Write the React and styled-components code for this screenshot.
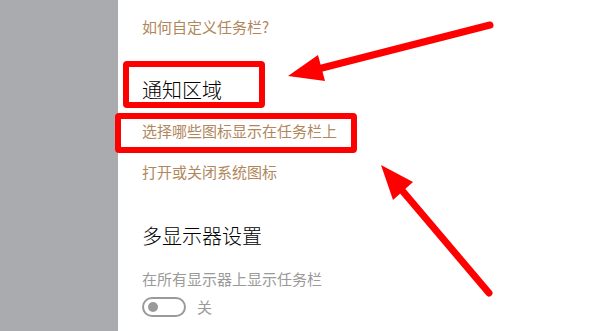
import styled, { createGlobalStyle } from 'styled-components';

const GlobalStyle = createGlobalStyle`
  html, body {
    margin: 0;
    padding: 0;
    background: #ffffff;
  }
  body {
    font-family: 'Noto Sans CJK SC', 'Noto Sans', sans-serif;
  }
`;

const Page = styled.div`
  position: relative;
  width: 600px;
  height: 331px;
  overflow: hidden;
  display: flex;
`;

const Sidebar = styled.div`
  width: 118px;
  flex: none;
  background: #a9abae;
`;

const Content = styled.div`
  flex: 1;
  display: flex;
  flex-direction: column;
  align-items: flex-start;
  padding: 17px 0 0 24px;
  background: #ffffff;
`;

const LinkText = styled.a`
  display: block;
  font-size: 15px;
  line-height: 20px;
  color: #b0875d;
  text-decoration: none;
  margin-top: ${(p) => p.$gap || 0}px;
  cursor: pointer;
`;

const Heading = styled.h2`
  margin: ${(p) => p.$gap || 0}px 0 0;
  font-size: 20px;
  line-height: 28px;
  font-weight: 300;
  color: #000000;
`;

const Hint = styled.div`
  margin-top: 19px;
  font-size: 15px;
  line-height: 20px;
  color: #9a9a9a;
`;

const ToggleRow = styled.div`
  margin-top: 8px;
  display: flex;
  align-items: center;
  gap: 11px;
`;

const Toggle = styled.div`
  box-sizing: border-box;
  width: 44px;
  height: 20px;
  border: 2px solid #9a9a9a;
  border-radius: 10px;
  display: flex;
  align-items: center;
  padding-left: 4px;
  &::before {
    content: '';
    width: 10px;
    height: 10px;
    border-radius: 50%;
    background: #9a9a9a;
  }
`;

const ToggleLabel = styled.span`
  font-size: 15px;
  line-height: 20px;
  color: #9a9a9a;
`;

const Marker = styled.div`
  position: absolute;
  box-sizing: border-box;
  left: ${(p) => p.$x}px;
  top: ${(p) => p.$y}px;
  width: ${(p) => p.$w}px;
  height: ${(p) => p.$h}px;
  border: 6px solid #ff0000;
  border-radius: 4px;
  pointer-events: none;
`;

const Arrows = styled.svg`
  position: absolute;
  left: 0;
  top: 0;
  width: 600px;
  height: 331px;
  pointer-events: none;
`;

export default function App() {
  return (
    <Page>
      <GlobalStyle />
      <Sidebar />
      <Content>
        <LinkText>如何自定义任务栏?</LinkText>
        <Heading $gap={39}>通知区域</Heading>
        <LinkText $gap={17}>选择哪些图标显示在任务栏上</LinkText>
        <LinkText $gap={21}>打开或关闭系统图标</LinkText>
        <Heading $gap={40}>多显示器设置</Heading>
        <Hint>在所有显示器上显示任务栏</Hint>
        <ToggleRow>
          <Toggle />
          <ToggleLabel>关</ToggleLabel>
        </ToggleRow>
      </Content>

      <Marker $x={123} $y={61} $w={142} $h={47} />
      <Marker $x={115} $y={113} $w={242} $h={40} />

      <Arrows viewBox="0 0 600 331">
        <line x1="490" y1="25" x2="318" y2="69" stroke="#ff0000" strokeWidth="7" strokeLinecap="round" />
        <polygon points="288,76 318,55 325,81" fill="#ff0000" />
        <line x1="489" y1="293" x2="400" y2="188" stroke="#ff0000" strokeWidth="7" strokeLinecap="round" />
        <polygon points="381,165 413,182 393,200" fill="#ff0000" />
      </Arrows>
    </Page>
  );
}
